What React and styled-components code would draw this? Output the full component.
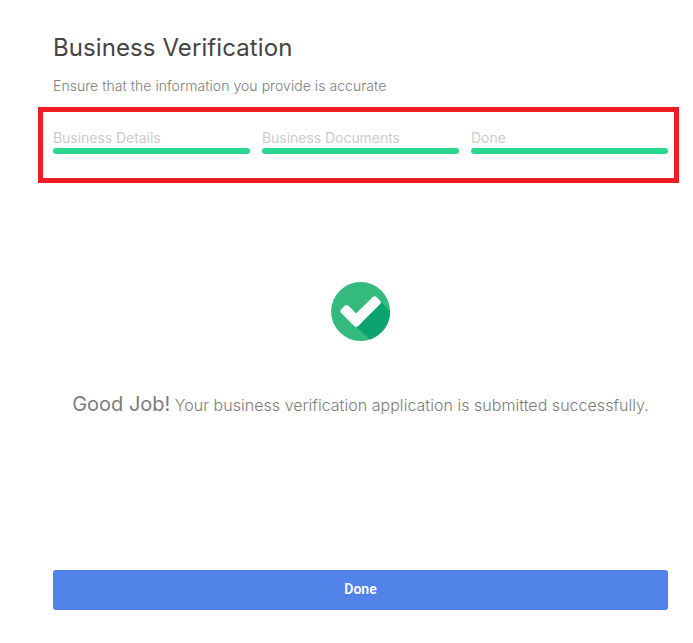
import React from 'react';
import styled, { createGlobalStyle } from 'styled-components';

const Global = createGlobalStyle`
  * { box-sizing: border-box; }
  body { margin: 0; background: #fff; font-family: Inter, sans-serif; }
`;
const Page = styled.main`
  width: 693px;
  height: 643px;
  padding: 32px 14px 0 38px;
  display: flex;
  flex-direction: column;
`;
const Title = styled.h1`
  margin: 0 15px;
  font-size: 24px;
  line-height: 32px;
  font-weight: 400;
  letter-spacing: 0.09px;
  color: #444;
`;
const Subtitle = styled.p`
  margin: 12px 15px 0;
  font-size: 14px;
  line-height: 20px;
  font-weight: 300;
  letter-spacing: 0.055px;
  color: #7c7c7c;
`;
const Steps = styled.section`
  margin-top: 11px;
  height: 76px;
  border: 5px solid #f01c24;
  padding: 16px 6px 0 10px;
  display: grid;
  grid-template-columns: repeat(3, 197px);
  column-gap: 12px;
  align-content: start;
`;
const Step = styled.div`
  font-size: 14px;
  line-height: 20px;
  letter-spacing: -0.04px;
  color: #ccc;
`;
const Bar = styled.div`
  height: 6px;
  border-radius: 3px;
  background: #2bd78e;
`;
const Result = styled.section`
  height: 387px;
  padding: 99px 0 0 4px;
  display: flex;
  flex-direction: column;
  align-items: center;
`;
const CheckIcon = styled.svg`
  display: block;
  width: 60px;
  height: 60px;
`;
const Message = styled.p`
  margin: 48px 0 0;
  font-size: 16px;
  line-height: 28px;
  font-weight: 300;
  letter-spacing: 0.035px;
  color: #7c7c7c;
  white-space: nowrap;
`;
const Lead = styled.span`
  font-size: 20px;
  font-weight: 400;
  letter-spacing: 0;
`;
const Button = styled.button`
  margin: 0 11px 0 15px;
  height: 40px;
  border: 0;
  border-radius: 3px;
  padding: 0 0 2px;
  background: #5082e8;
  color: #fff;
  font: 600 14px Roboto, sans-serif;
`;

const steps = ['Business Details', 'Business Documents', 'Done'];

export default function App() {
  return (
    <Page>
      <Global />
      <Title>Business Verification</Title>
      <Subtitle>Ensure that the information you provide is accurate</Subtitle>
      <Steps>
        {steps.map((s) => (
          <Step key={s}>{s}<Bar /></Step>
        ))}
      </Steps>
      <Result>
        <CheckIcon viewBox="0 0 60 60">
          <defs>
            <clipPath id="disc"><circle cx="29.6" cy="29.5" r="29.5" /></clipPath>
          </defs>
          <g clipPath="url(#disc)">
            <rect width="60" height="60" fill="#34ba7c" />
            <path d="M48.5 18.5 L62 32 V62 H43.5 L23.5 43 L34 26Z" fill="#0ba36e" />
          </g>
          <g fill="#fff" transform="translate(25.2 38.7) rotate(-45)">
            <rect x="-5.1" y="-5.1" width="36.2" height="10.2" rx="3" />
            <rect x="-5.1" y="-18.7" width="10.2" height="23.8" rx="3" />
          </g>
        </CheckIcon>
        <Message><Lead>Good Job!</Lead> Your business verification application is submitted successfully.</Message>
      </Result>
      <Button>Done</Button>
    </Page>
  );
}
